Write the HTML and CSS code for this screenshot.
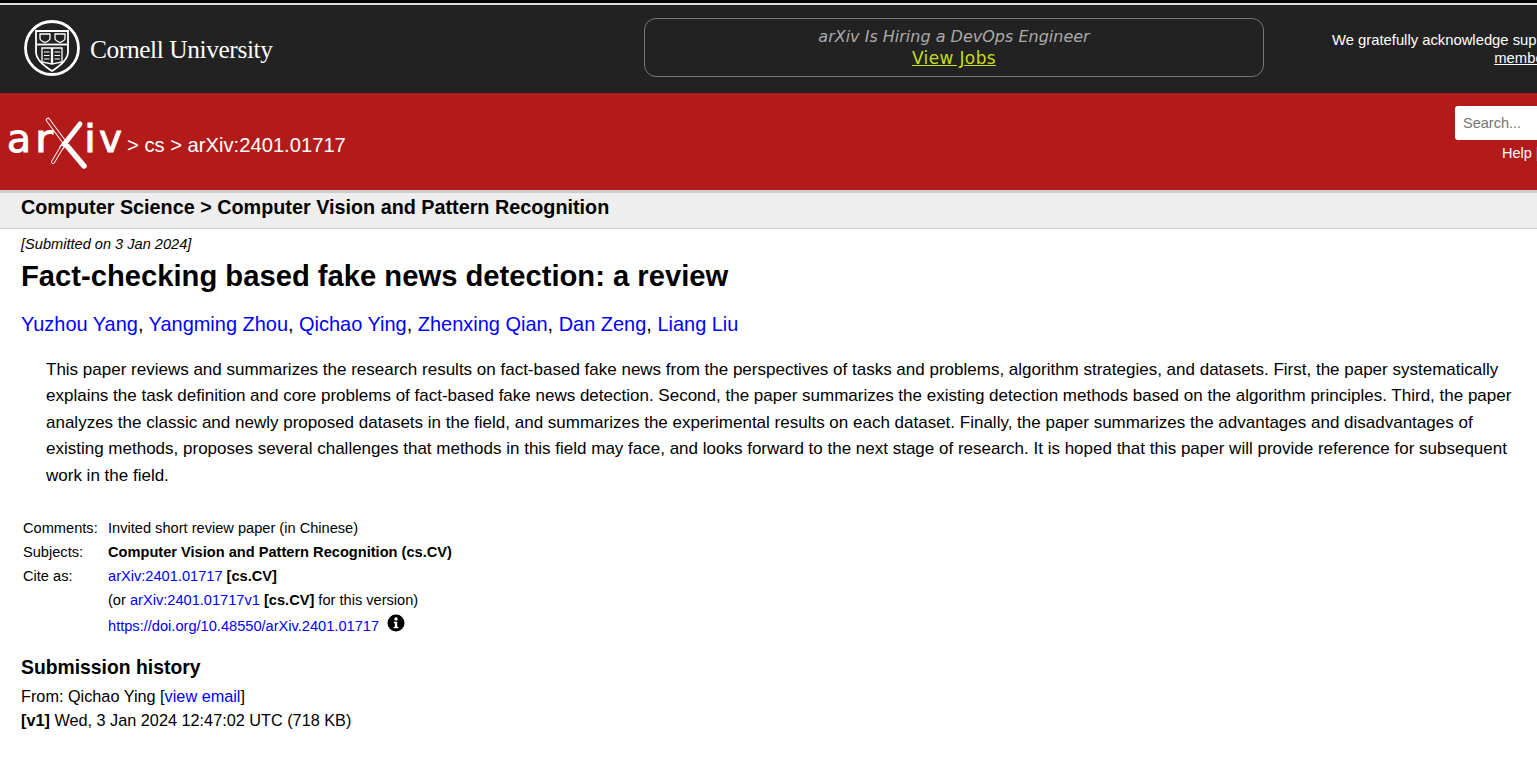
FILE: index.html
```html
<!DOCTYPE html>
<html lang="en">
<head>
    <meta charset="UTF-8">
    <title>Fact-checking based fake news detection: a review</title>
    <link rel="stylesheet" href="styles.css">
</head>
<body>
    <div class="top-rule"></div>

    <!-- cornell bar -->
    <div class="cu-bar">
        <a class="cu-logo" href="#">
            <svg class="cu-seal" width="56" height="56" viewBox="0 0 56 56">
                <circle cx="28" cy="28" r="26.500" fill="none" stroke="#fff" stroke-width="2.800"/>
                <path d="M12 11h32v21c0 8-8 14-16 19-8-5-16-11-16-19z" fill="none" stroke="#fff" stroke-width="1.800"/>
                <path d="M12 24.500h32" stroke="#fff" stroke-width="1.800"/>
                <path d="M16 14h10v4.500c0 2-2.500 3-5 4-2.500-1-5-2-5-4zM31 14h10v4.500c0 2-2.500 3-5 4-2.500-1-5-2-5-4z" fill="none" stroke="#fff" stroke-width="1.300"/>
                <path d="M18 28h9.500v16l-9.500-2zM38 28h-9.500v16l9.500-2z" fill="none" stroke="#fff" stroke-width="1.300"/>
                <path d="M20 32h5.500M20 35.500h5.500M20 39h5.500M30.500 32h5.500M30.500 35.500h5.500M30.500 39h5.500" stroke="#fff" stroke-width="1.200"/>
            </svg>
            <span class="cu-name">Cornell University</span>
        </a>
        <div class="banner">
            <div class="banner-title">arXiv Is Hiring a DevOps Engineer</div>
            <a class="banner-link" href="#">View Jobs</a>
        </div>
        <div class="support">
            We gratefully acknowledge support from the Simons Foundation and<br>
            <a href="#">member institutions</a>
        </div>
    </div>

    <!-- red arxiv header -->
    <div class="ax-header">
        <a class="ax-logo" href="#">
            <svg width="123" height="54" viewBox="0 0 123 54">
                <text class="ax-letters" x="7" y="35" textLength="24" lengthAdjust="spacingAndGlyphs">a</text>
                <text class="ax-letters" x="35" y="35" textLength="18" lengthAdjust="spacingAndGlyphs">r</text>
                <text class="ax-letters" x="84" y="35" textLength="12" lengthAdjust="spacingAndGlyphs">i</text>
                <text class="ax-letters" x="99" y="35" textLength="23" lengthAdjust="spacingAndGlyphs">v</text>
                <path d="M48 3L68 30" stroke="#fff" stroke-width="4.500" stroke-linecap="round"/>
                <path d="M48 3L68 30" stroke="#b31b1b" stroke-width="2.600" stroke-linecap="round"/>
                <path d="M68 30L84 49" stroke="#fff" stroke-width="5.500" stroke-linecap="round"/>
                <path d="M80 7L62 30" stroke="#fff" stroke-width="5" stroke-linecap="round"/>
                <path d="M62 30L53 45" stroke="#fff" stroke-width="4" stroke-linecap="round"/>
                <path d="M62 30L53 45" stroke="#b31b1b" stroke-width="2.200" stroke-linecap="round"/>
            </svg>
        </a>
        <div class="crumbs">&gt; cs &gt; arXiv:2401.01717</div>
        <div class="search-block">
            <input class="search-input" type="text" placeholder="Search...">
            <div class="search-links"><a href="#">Help</a> | <a href="#">Advanced Search</a></div>
        </div>
    </div>

    <div class="subheader">Computer Science &gt; Computer Vision and Pattern Recognition</div>

    <div class="content">
        <div class="dateline">[Submitted on 3 Jan 2024]</div>
        <h1 class="title">Fact-checking based fake news detection: a review</h1>
        <div class="authors">
            <a href="#">Yuzhou Yang</a>, <a href="#">Yangming Zhou</a>, <a href="#">Qichao Ying</a>, <a href="#">Zhenxing Qian</a>, <a href="#">Dan Zeng</a>, <a href="#">Liang Liu</a>
        </div>
        <blockquote class="abstract">This paper reviews and summarizes the research results on fact-based fake news from the perspectives of tasks and problems, algorithm strategies, and datasets. First, the paper systematically explains the task definition and core problems of fact-based fake news detection. Second, the paper summarizes the existing detection methods based on the algorithm principles. Third, the paper analyzes the classic and newly proposed datasets in the field, and summarizes the experimental results on each dataset. Finally, the paper summarizes the advantages and disadvantages of existing methods, proposes several challenges that methods in this field may face, and looks forward to the next stage of research. It is hoped that this paper will provide reference for subsequent work in the field.</blockquote>

        <div class="meta">
            <div class="meta-label">Comments:</div>
            <div>Invited short review paper (in Chinese)</div>
            <div class="meta-label">Subjects:</div>
            <div><b>Computer Vision and Pattern Recognition (cs.CV)</b></div>
            <div class="meta-label">Cite as:</div>
            <div>
                <div class="cite-line"><a href="#">arXiv:2401.01717</a> <b>[cs.CV]</b></div>
                <div class="cite-line">(or <a href="#">arXiv:2401.01717v1</a> <b>[cs.CV]</b> for this version)</div>
                <div class="cite-line doi-line">
                    <a class="doi-link" href="#">https://doi.org/10.48550/arXiv.2401.01717</a>
                    <svg class="info-icon" width="18" height="18" viewBox="0 0 18 18">
                        <circle cx="9" cy="9" r="8.500" fill="#000"/>
                        <circle cx="9" cy="5" r="1.700" fill="#fff"/>
                        <path d="M6.700 7.700h3.500v5h1.200v1.500H6.700v-1.500h1.200v-3.500H6.700z" fill="#fff"/>
                    </svg>
                </div>
            </div>
        </div>

        <h2 class="history-title">Submission history</h2>
        <div class="history">
            From: Qichao Ying [<a href="#">view email</a>]<br>
            <b>[v1]</b> Wed, 3 Jan 2024 12:47:02 UTC (718 KB)
        </div>
    </div>
</body>
</html>
```

FILE: styles.css
```css
html, body {
    overflow-x: hidden;
}

body {
    margin: 0;
    font-family: "Liberation Sans", Arial, sans-serif;
    font-size: 16px;
    color: #000;
    background: #fff;
}

a {
    color: #00f;
    text-decoration: none;
}

.top-rule {
    height: 3px;
    background: #000;
    border-bottom: 2px solid #ddd;
}

.cu-bar {
    display: flex;
    align-items: flex-start;
    height: 88px;
    background: #222;
    color: #fff;
}

.cu-logo {
    display: flex;
    align-items: center;
    width: 620px;
    flex-shrink: 0;
    margin: 15px 0 0 24px;
    color: #fff;
}

.cu-name {
    margin: 2px 0 0 10px;
    font-family: "Liberation Serif", serif;
    font-size: 25.400px;
    letter-spacing: -0.4px;
}

.banner {
    box-sizing: border-box;
    flex-shrink: 0;
    width: 620px;
    height: 59px;
    margin-top: 13px;
    padding-top: 6px;
    border: 1px solid #777;
    border-radius: 12px;
    text-align: center;
    font-family: "DejaVu Sans", sans-serif;
    font-size: 16px;
    line-height: 22px;
}

.banner-title {
    padding-top: 1px;
    color: #aaa;
    font-style: italic;
}

.banner-link {
    display: inline-block;
    margin-top: -1px;
    color: #c8dc1e;
    font-size: 17px;
    letter-spacing: 0.35px;
    text-decoration: underline;
}

.support {
    flex-shrink: 0;
    width: max-content;
    margin: 26px 0 0 68px;
    text-align: center;
    font-size: 14.800px;
    line-height: 18px;
}

.support a {
    margin-left: 4px;
    color: #fff;
    text-decoration: underline;
}

.ax-header {
    display: flex;
    align-items: flex-start;
    height: 97px;
    background: #b31b1b;
    border-bottom: 3px solid #ccc;
    color: #fff;
}

.ax-logo {
    margin: 24px 0 0 0;
    height: 54px;
}

.ax-letters {
    fill: #fff;
    stroke: #fff;
    stroke-width: 0.9px;
    font-family: "DejaVu Sans", sans-serif;
    font-size: 37px;
}

.crumbs {
    margin: 41px 0 0 4px;
    font-size: 20.200px;
    line-height: 23px;
}

.search-block {
    flex-shrink: 0;
    width: 240px;
    margin: 13px 0 0 auto;
    transform: translateX(158px);
}

.search-input {
    box-sizing: border-box;
    display: block;
    width: 100%;
    height: 34px;
    padding: 0 8px;
    border: 0;
    border-radius: 3px;
    background: #fff;
    font-family: "Liberation Sans", Arial, sans-serif;
    font-size: 14.500px;
}

.search-links {
    margin: 4px 0 0 47px;
    font-size: 14.500px;
    line-height: 18px;
}

.search-links a {
    color: #fff;
}

.subheader {
    box-sizing: border-box;
    height: 36px;
    padding: 1px 21px 0;
    background: #eee;
    border-bottom: 1px solid #ccc;
    font-size: 19.800px;
    font-weight: bold;
    line-height: 26px;
}

.content {
    padding: 0 21px;
}

.dateline {
    margin-top: 7px;
    font-size: 14.600px;
    font-style: italic;
    line-height: 16px;
}

.title {
    margin: 8px 0 0;
    font-size: 29.200px;
    line-height: 33px;
}

.authors {
    margin-top: 18px;
    font-size: 19.970px;
    line-height: 26px;
}

.abstract {
    margin: 20px 0 0 25px;
    font-size: 17.016px;
    line-height: 26.400px;
}

.meta {
    display: grid;
    grid-template-columns: 85px 1fr;
    margin: 27px 0 0 2px;
    font-size: 14.620px;
    line-height: 24px;
}

.doi-line {
    display: flex;
    align-items: center;
    gap: 8px;
    height: 26px;
}

.doi-link {
    margin-top: 2px;
}

.info-icon {
    margin-top: -4px;
}

.history-title {
    margin: 16px 0 0;
    font-size: 19.350px;
    line-height: 26px;
}

.history {
    margin-top: 4px;
    font-size: 16.250px;
    line-height: 24px;
}
```
